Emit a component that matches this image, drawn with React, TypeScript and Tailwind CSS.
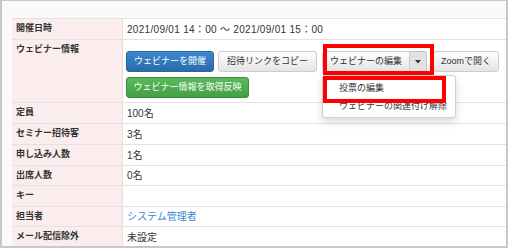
import { ReactNode } from "react";

interface RowProps {
  label: string;
  height: string;
  top?: boolean;
  children?: ReactNode;
}

function Row({ label, height, top, children }: RowProps) {
  return (
    <div className={`flex border-t border-[#e2e2e2] ${height}`}>
      <div
        className={`w-[111px] shrink-0 bg-[#fbeded] border-r border-[#e6dede] pl-[4px] text-[9px] font-bold text-[#333] flex ${
          top ? "items-start pt-[3px]" : "items-center"
        }`}
      >
        {label}
      </div>
      <div className={`flex-1 bg-white pl-[4px] text-[10px] text-[#333] flex ${top ? "items-start" : "items-center"}`}>
        {children}
      </div>
    </div>
  );
}

const btn =
  "h-[21px] rounded-[3px] border text-[9px] flex items-center justify-center whitespace-nowrap";
const btnDefault = `${btn} border-[#cccccc] bg-gradient-to-b from-white to-[#e4e4e4] text-[#333]`;

export default function App() {
  return (
    <div
      className="relative w-[508px] h-[248px] overflow-hidden bg-[#fafafa] border-l-2 border-r-2 border-b-2 border-t border-[#c8c8c8] pl-[10px] pt-[17px]"
      style={{ fontFamily: '"Liberation Sans", "Noto Sans CJK JP", sans-serif' }}
    >
      <div className="flex flex-col">
        <Row label="開催日時" height="h-[21px]">
          <span className="tracking-[0.3px]">2021/09/01 14：00 ～ 2021/09/01 15：00</span>
        </Row>
        <Row label="ウェビナー情報" height="h-[63px]" top>
          <div className="flex flex-col gap-[5px] pt-[11px] -ml-[1px]">
            <div className="flex">
              <div className={`${btn} w-[88px] border-[#2a65a0] bg-gradient-to-b from-[#3b88cc] to-[#2c6bac] text-white`}>
                ウェビナーを開催
              </div>
              <div className={`${btnDefault} w-[99px] ml-[4px]`}>招待リンクをコピー</div>
              <div className="relative ml-[5px] flex">
                <div className={`${btnDefault} w-[88px] rounded-r-none`}>ウェビナーの編集</div>
                <div className="h-[21px] w-[17px] rounded-r-[3px] border border-l-0 border-[#c4c4c4] bg-[#e2e2e2] flex items-center justify-center">
                  <svg width="6" height="4" viewBox="0 0 6 4">
                    <path d="M0 0H6L3 3.5Z" fill="#333" />
                  </svg>
                </div>
                <div className="absolute left-0 top-[24px] w-[134px] h-[43px] bg-white border border-[#d0d0d0] rounded-[3px] shadow-[0_4px_8px_rgba(0,0,0,0.15)] flex flex-col pt-[4px] text-[9px] text-[#333] z-10">
                  <div className="h-[18px] pl-[16px] flex items-center">投票の編集</div>
                  <div className="h-[18px] pl-[16px] flex items-center">ウェビナーの関連付け解除</div>
                </div>
              </div>
              <div className={`${btnDefault} w-[66px] ml-[6px]`}>Zoomで開く</div>
            </div>
            <div className="flex">
              <div className={`${btn} w-[123px] border-[#3d8c3d] bg-gradient-to-b from-[#5cb85c] to-[#44a044] text-white`}>
                ウェビナー情報を取得反映
              </div>
            </div>
          </div>
        </Row>
        <Row label="定員" height="h-[21px]">100名</Row>
        <Row label="セミナー招待客" height="h-[21px]">3名</Row>
        <Row label="申し込み人数" height="h-[21px]">1名</Row>
        <Row label="出席人数" height="h-[20px]">0名</Row>
        <Row label="キー" height="h-[21px]" />
        <Row label="担当者" height="h-[20px]">
          <span className="text-[#3a87cf]">システム管理者</span>
        </Row>
        <Row label="メール配信除外" height="h-[21px]">未設定</Row>
      </div>

      {/* annotation boxes */}
      <div className="absolute left-[321px] top-[43px] w-[111px] h-[31px] border-[4px] border-[#ff0000] z-20" />
      <div className="absolute left-[321px] top-[75px] w-[123px] h-[27px] border-[4px] border-[#ff0000] z-20" />
    </div>
  );
}
